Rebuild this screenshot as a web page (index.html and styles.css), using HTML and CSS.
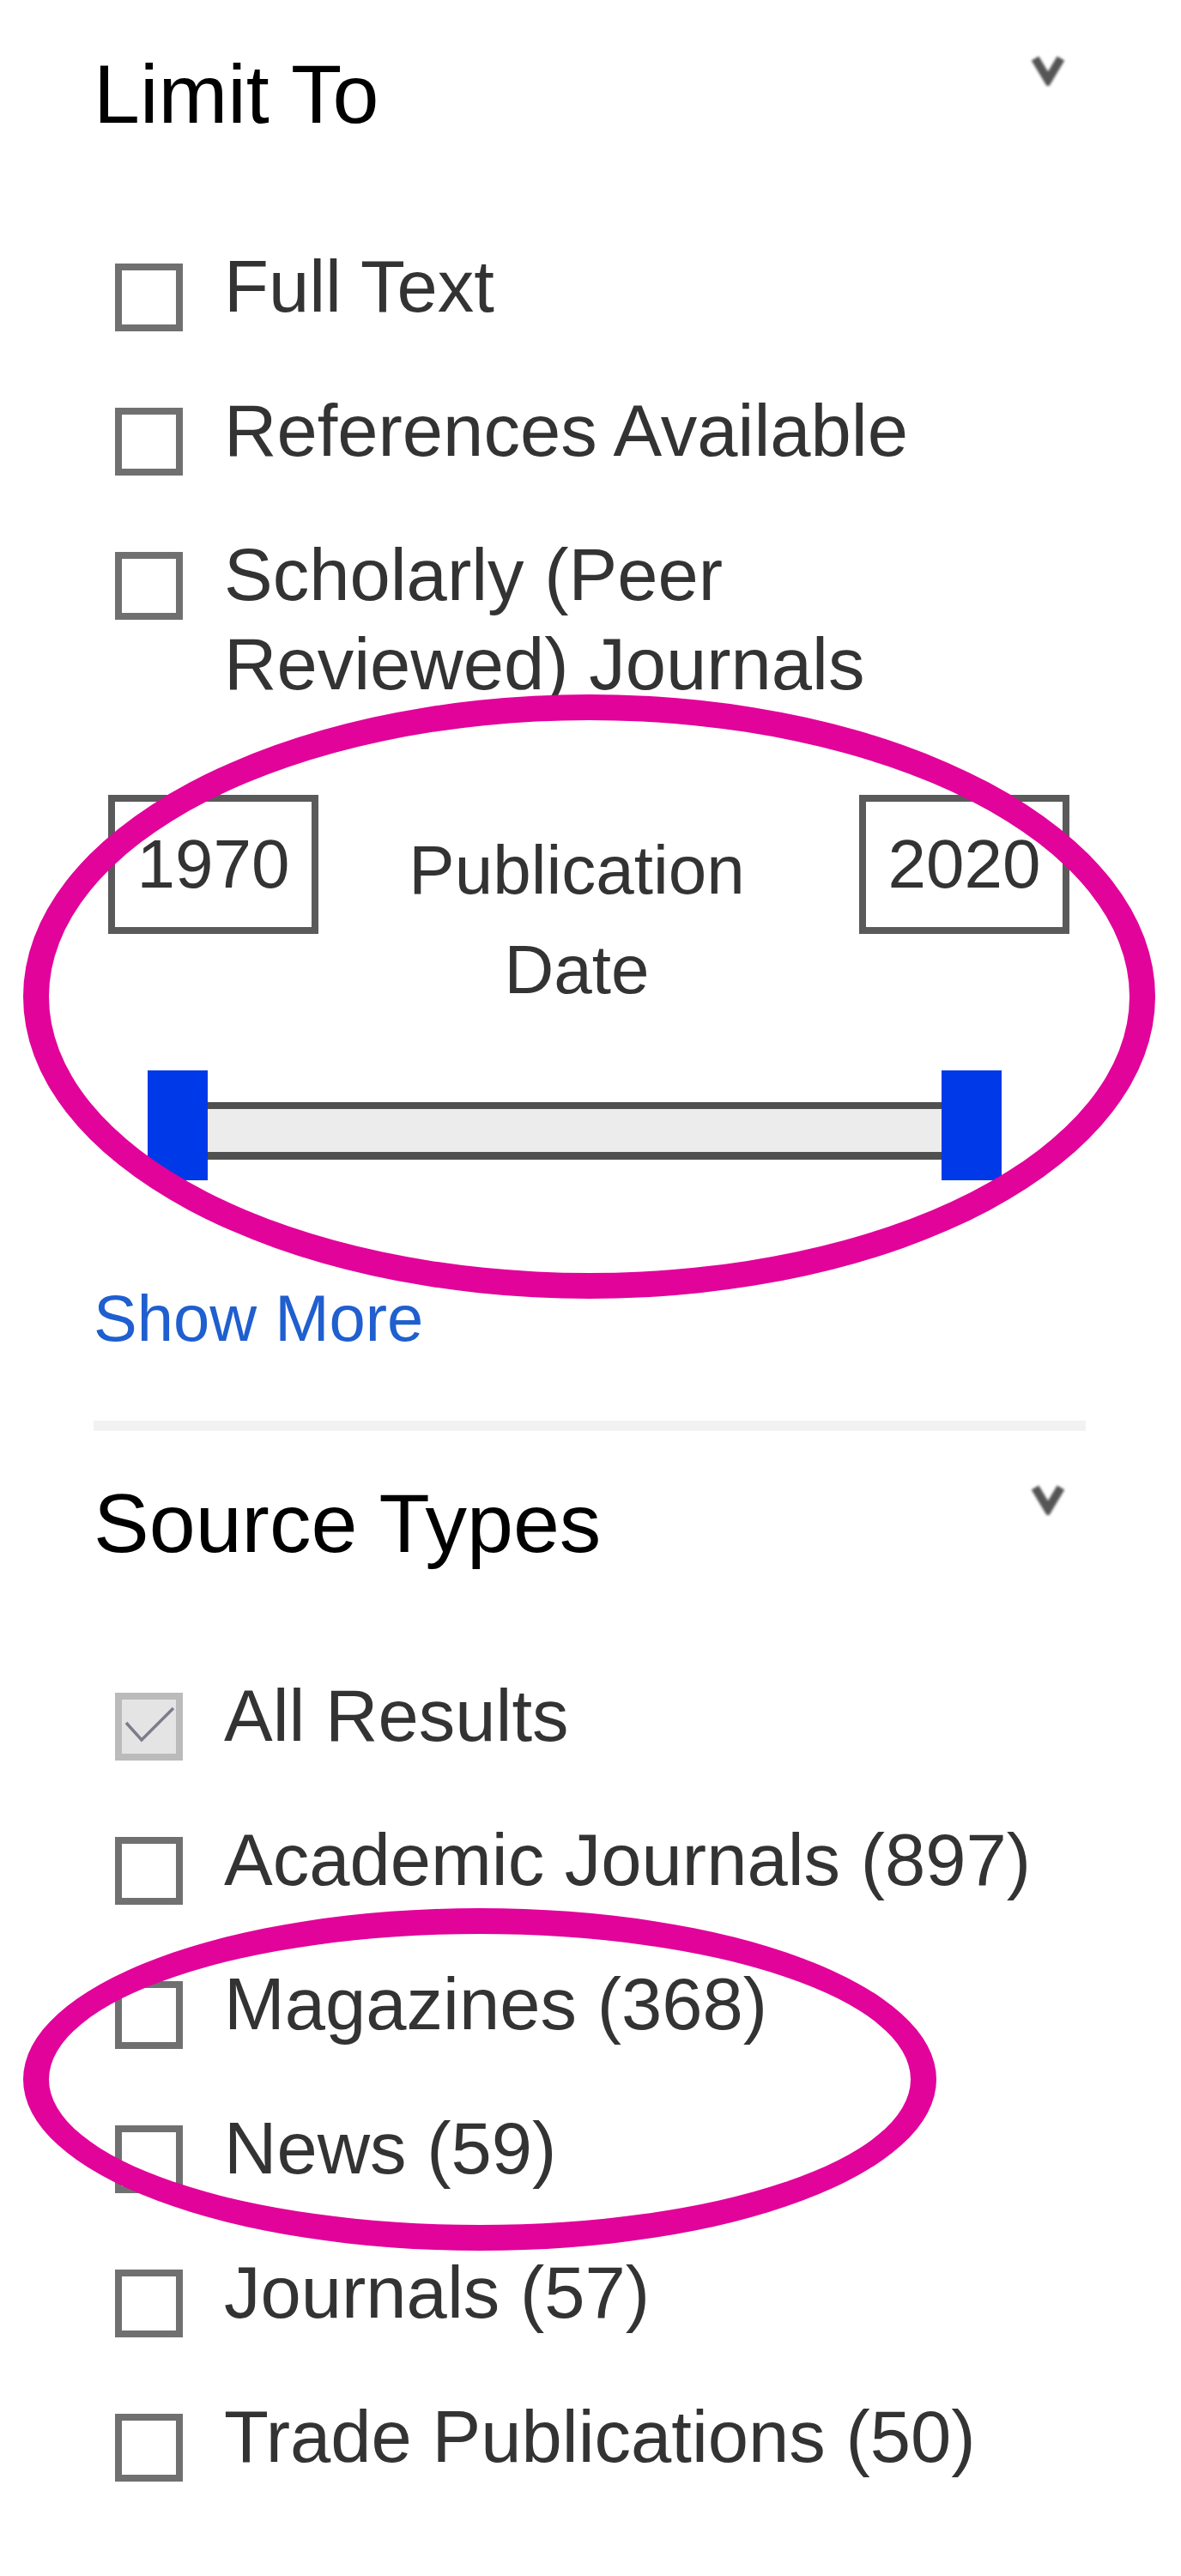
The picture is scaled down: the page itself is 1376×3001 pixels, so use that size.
FILE: index.html
```html
<!DOCTYPE html>
<html lang="en">
<head>
<meta charset="utf-8">
<title>Limit To</title>
<link rel="stylesheet" href="styles.css">
</head>
<body>
<div class="page">
  <section class="facet">
    <div class="facet-head">
      <h2 class="facet-title">Limit To</h2>
      <svg class="chev" viewBox="0 0 42 37" aria-hidden="true"><polyline points="6,5 21,30 36,5" fill="none" stroke="#555" stroke-width="10"/></svg>
    </div>
    <ul class="opts">
      <li class="opt"><span class="cb"></span><span class="opt-label">Full Text</span></li>
      <li class="opt"><span class="cb"></span><span class="opt-label">References Available</span></li>
      <li class="opt"><span class="cb"></span><span class="opt-label">Scholarly (Peer Reviewed) Journals</span></li>
    </ul>
    <div class="date-range">
      <div class="year-box">1970</div>
      <div class="date-label">Publication Date</div>
      <div class="year-box">2020</div>
    </div>
    <div class="slider">
      <span class="handle"></span>
      <span class="track"></span>
      <span class="handle"></span>
    </div>
    <a class="show-more">Show More</a>
  </section>
  <div class="divider"></div>
  <section class="facet facet-second">
    <div class="facet-head">
      <h2 class="facet-title">Source Types</h2>
      <svg class="chev" viewBox="0 0 42 37" aria-hidden="true"><polyline points="6,5 21,30 36,5" fill="none" stroke="#555" stroke-width="10"/></svg>
    </div>
    <ul class="opts">
      <li class="opt"><span class="cb cb-checked"><svg class="tick" viewBox="0 0 63 63"><polyline points="5,27 23,47 60,10" fill="none" stroke="#7c7c8c" stroke-width="3.5"/></svg></span><span class="opt-label">All Results</span></li>
      <li class="opt"><span class="cb"></span><span class="opt-label">Academic Journals (897)</span></li>
      <li class="opt"><span class="cb"></span><span class="opt-label">Magazines (368)</span></li>
      <li class="opt"><span class="cb"></span><span class="opt-label">News (59)</span></li>
      <li class="opt"><span class="cb"></span><span class="opt-label">Journals (57)</span></li>
      <li class="opt"><span class="cb"></span><span class="opt-label">Trade Publications (50)</span></li>
    </ul>
  </section>
  <div class="mark mark-date"></div>
  <div class="mark mark-types"></div>
</div>
</body>
</html>
```

FILE: styles.css
```css
* { box-sizing: border-box; }
html, body { margin: 0; padding: 0; background: #fff; }
body {
  font-family: "Liberation Sans", Arial, Helvetica, sans-serif;
  color: #333;
}
.page {
  position: relative;
  width: 1376px;
  min-height: 3001px;
  padding: 55px 111px 0 109px;
}
.facet-head {
  display: flex;
  justify-content: space-between;
  align-items: flex-start;
}
.facet-title {
  margin: 0;
  font-size: 97px;
  line-height: 110px;
  font-weight: normal;
  color: #000;
}
.chev {
  width: 42px;
  height: 37px;
  margin-top: 8px;
  margin-right: 23px;
  filter: blur(1.4px);
}
.opts {
  list-style: none;
  margin: 117px 0 0;
  padding: 0 40px 0 25px;
  display: flex;
  flex-direction: column;
  gap: 64px;
}
.opt {
  display: flex;
  align-items: flex-start;
  font-size: 85px;
  line-height: 104px;
  color: #333;
}
.cb {
  flex: none;
  width: 79px;
  height: 79px;
  border: 8px solid #707070;
  background: #fff;
  margin-top: 25px;
  margin-right: 48px;
}
.cb-checked {
  border-color: #bbbbbb;
  background: #e4e4e4;
}
.tick {
  display: block;
  width: 63px;
  height: 63px;
}
.date-range {
  display: flex;
  align-items: flex-start;
  margin: 100px 19px 0 17px;
}
.year-box {
  flex: none;
  width: 245px;
  height: 162px;
  border: 8px solid #5a5a5a;
  display: flex;
  align-items: center;
  justify-content: center;
  font-size: 80px;
  line-height: 1;
  color: #333;
}
.date-label {
  flex: 1;
  margin-top: 30px;
  padding: 0 90px 0 62px;
  text-align: center;
  font-size: 80px;
  line-height: 116px;
  color: #333;
}
.slider {
  display: flex;
  align-items: flex-start;
  margin: 59px 0 0 63px;
}
.handle {
  flex: none;
  width: 70px;
  height: 128px;
  background: #0039e8;
}
.track {
  flex: none;
  width: 855px;
  height: 67px;
  margin-top: 37px;
  background: #ececec;
  border-top: 8px solid #505050;
  border-bottom: 9px solid #505050;
}
.show-more {
  display: block;
  margin-top: 118px;
  font-size: 76px;
  line-height: 86px;
  color: #1f5fcf;
  text-decoration: none;
}
.divider {
  margin-top: 76px;
  height: 12px;
  background: #f2f2f2;
}
.facet-second {
  margin-top: 53px;
}
.mark {
  position: absolute;
  border: 30px solid #e1039a;
  border-radius: 50%;
  pointer-events: none;
}
.mark-date {
  left: 27px;
  top: 809px;
  width: 1319px;
  height: 704px;
}
.mark-types {
  left: 27px;
  top: 2223px;
  width: 1064px;
  height: 399px;
}
```
